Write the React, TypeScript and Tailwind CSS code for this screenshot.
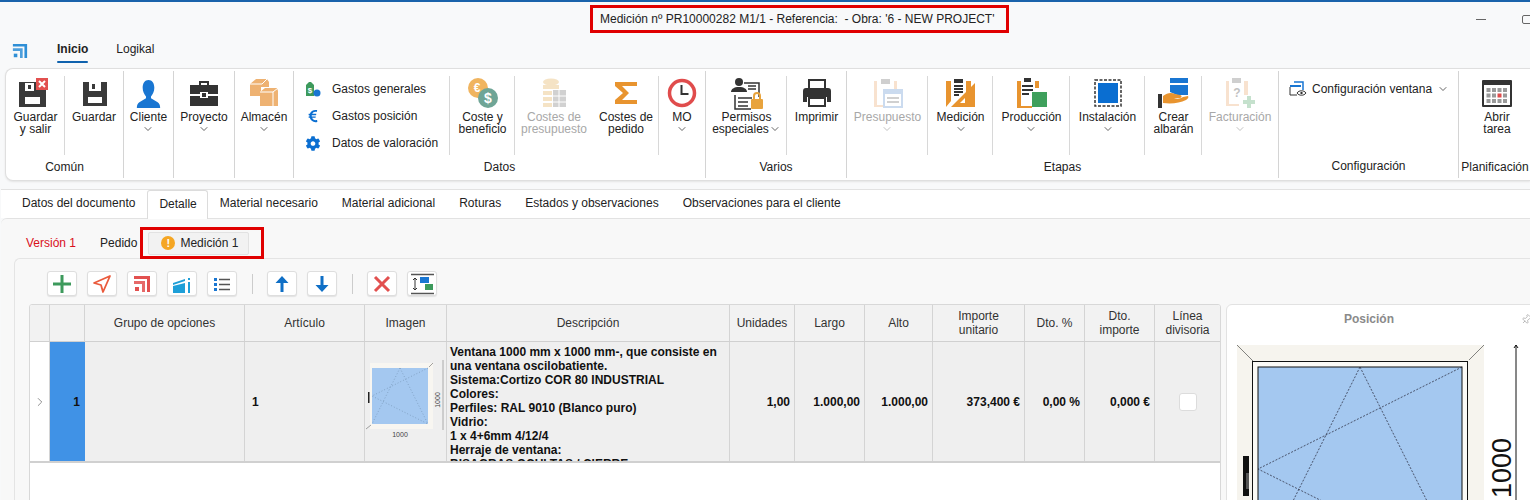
import { ReactNode } from 'react'
import { ChevronDown, ChevronRight, Pin } from 'lucide-react'
import { FaCog, FaEuroSign } from 'react-icons/fa'

const Logo = ({ c = '#2f8fd6', s = 18 }: { c?: string; s?: number }) => (
  <svg width={s} height={s} viewBox="0 0 18 18">
    <path d="M1 1h16v16h-3V4H1z" fill={c} />
    <path d="M1 6h11v11H9V9H1z" fill={c} opacity=".85" />
    <rect x="2" y="12" width="4" height="4" fill={c} />
  </svg>
)

const Floppy = ({ x = false }: { x?: boolean }) => (
  <svg width="32" height="30" viewBox="0 0 32 30" className={x ? '-ml-[3px]' : ''}>
    {x ? (
      <>
        <path d="M1 4h21v8h6v17H1z" fill="#3a3a3a" />
        <path d="M7 5h9v8H7zM7 19h15v7H7z" fill="#fff" />
        <rect x="10" y="7" width="3" height="4" fill="#3a3a3a" />
        <rect x="18" y="0" width="12" height="12" fill="#e2504f" />
        <path d="M21 3l6 6M27 3l-6 6" stroke="#fff" strokeWidth="2" />
      </>
    ) : (
      <>
        <path d="M5 4h24v24H5z" fill="#3a3a3a" />
        <path d="M11 4h12v9H11zM10 19h14v6H10z" fill="#fff" />
        <rect x="14" y="6" width="3" height="5" fill="#3a3a3a" />
      </>
    )}
  </svg>
)

const Person = () => (
  <svg width="25" height="29" viewBox="0 0 30 30" preserveAspectRatio="none">
    <path d="M15 1c4.500 0 7 3.500 7 8 0 4-2 7-4 9v2l8 4c2 1 3 3 3 6H1c0-3 1-5 3-6l8-4v-2c-2-2-4-5-4-9 0-4.500 2.500-8 7-8z" fill="#1976d2" />
  </svg>
)

const Briefcase = () => (
  <svg width="30" height="30" viewBox="0 0 30 30">
    <path d="M10 7V3h10v4h-2V5h-6v2z" fill="#333" />
    <path d="M1 7h28v9H19v-2h-8v2H1zM1 18h10v2h8v-2h10v10H1z" fill="#333" />
    <rect x="13" y="15" width="4" height="4" fill="#333" />
  </svg>
)

const Boxes = () => (
  <svg width="30" height="30" viewBox="0 0 30 30">
    <path d="M1 6l6-5h11l2 3v5H12v9H1z" fill="#eeb272" />
    <path d="M1 6h12l5-5" fill="none" stroke="#fff" />
    <path d="M11 14l5-4h12l1 3v15H11z" fill="#eeb272" />
    <path d="M11 14h13l5-4M24 14v14" fill="none" stroke="#fff" />
  </svg>
)

const Tag = () => (
  <svg width="16" height="16" viewBox="0 0 16 16">
    <path d="M1 4l3-3h2l3 3v11H1z" fill="#3d9a5c" />
    <text x="5" y="12" fontSize="8" fontFamily="Liberation Sans, sans-serif" fontWeight="700" fill="#fff" textAnchor="middle">$</text>
    <circle cx="12" cy="12" r="3.500" fill="#1976d2" />
  </svg>
)

const Coins = () => (
  <svg width="32" height="32" viewBox="0 0 32 32">
    <circle cx="11" cy="11" r="10" fill="#f0b45f" />
    <text x="10" y="15" fontSize="12" fontFamily="Liberation Sans, sans-serif" fontWeight="700" fill="#fff" textAnchor="middle">€</text>
    <circle cx="21" cy="21" r="10" fill="#6fa596" />
    <text x="21" y="26" fontSize="14" fontFamily="Liberation Sans, sans-serif" fontWeight="700" fill="#fff" textAnchor="middle">$</text>
  </svg>
)

const Database = () => (
  <svg width="26" height="30" viewBox="0 0 26 30" opacity=".45">
    <ellipse cx="10" cy="4" rx="8" ry="3.500" fill="#e9c27f" />
    <path d="M2 7h16v4H2zM2 13h9v4H2zM2 19h9v4H2zM2 25h9v4H2z" fill="#e9c27f" />
    <path d="M12 12h13v17H12z" fill="#9a9a9a" />
    <path d="M18 12v17M12 18h13M12 24h13" stroke="#fff" />
  </svg>
)

const Sigma = () => (
  <svg width="24" height="24" viewBox="0 0 24 24">
    <path d="M1 1h22v4H8l7 7-7 7h15v4H1v-4l8-7-8-7z" fill="#e8942f" />
  </svg>
)

const Clock = () => (
  <svg width="30" height="30" viewBox="0 0 30 30">
    <circle cx="15" cy="15" r="12.500" fill="none" stroke="#e04c4c" strokeWidth="3.500" />
    <path d="M14.500 7v9h7" fill="none" stroke="#333" strokeWidth="2" />
  </svg>
)

const Permisos = () => (
  <svg width="34" height="33" viewBox="0 0 34 33">
    <circle cx="9" cy="5" r="4" fill="#333" />
    <path d="M1 15c0-3 3-5 8-5s8 2 8 5z" fill="#333" />
    <path d="M14 6h15v14M5 18v14h16M18 9h8M18 12h8M8 21h14M8 25h10M8 29h10" fill="none" stroke="#333" strokeWidth="1.500" />
    <rect x="21" y="22" width="12" height="10" rx="1" fill="#e8a33d" />
    <path d="M24 22v-3a3 3 0 016 0v3" fill="none" stroke="#e8a33d" strokeWidth="2" />
  </svg>
)

const Printer = () => (
  <svg width="30" height="30" viewBox="0 0 30 30">
    <path d="M7 11V2h16v9" fill="none" stroke="#333" strokeWidth="2" />
    <path d="M4 10h22a3 3 0 013 3v11h-4v-5H5v5H1V13a3 3 0 013-3z" fill="#333" />
    <rect x="7" y="20" width="16" height="8" fill="#fff" stroke="#333" strokeWidth="2" />
  </svg>
)

const Clipboard = ({ children, faded }: { children?: ReactNode; faded?: boolean }) => (
  <svg width="32" height="32" viewBox="0 0 32 32" opacity={faded ? 0.4 : 1}>
    {children}
  </svg>
)

const Presupuesto = () => (
  <Clipboard faded>
    <path d="M2 4h3v24h8v2H2zM22 4h3v8h-3z" fill="#eeb98a" />
    <path d="M9 2h9v5H9z" fill="#888" />
    <rect x="12" y="13" width="18" height="17" fill="#fff" stroke="#7ea8d8" strokeWidth="2" />
    <path d="M12 14h18v3H12z" fill="#7ea8d8" />
    <path d="M15 21h12M15 25h12" stroke="#666" strokeWidth="1.500" />
  </Clipboard>
)

const Medicion = () => (
  <Clipboard>
    <path d="M1 4h5v20l-5 6zM21 4h5v9l-5 5zM6 30l24-24v24z" fill="#e8942f" />
    <path d="M20 21v5h-5z" fill="#fff" />
    <path d="M9 2h9v4H9z" fill="#333" />
    <path d="M9 9h9M9 12h9M9 15h9M9 18h5" stroke="#333" strokeWidth="1.800" />
  </Clipboard>
)

const Produccion = () => (
  <Clipboard>
    <path d="M1 4h4v25h11v2H1zM19 4h4v7h-4z" fill="#e8942f" />
    <path d="M8 1h7v4H8z" fill="#333" />
    <path d="M6 9h11M6 13h11M6 17h7" stroke="#333" strokeWidth="2" />
    <rect x="16" y="15" width="15" height="15" fill="#3fa05c" />
  </Clipboard>
)

const Instalacion = () => (
  <svg width="28" height="28" viewBox="0 0 28 28">
    <rect x="1" y="1" width="26" height="26" fill="none" stroke="#333" strokeWidth="1.500" strokeDasharray="3 1.500" />
    <rect x="4" y="4" width="20" height="20" fill="#0a6ed1" />
  </svg>
)

const Albaran = () => (
  <svg width="34" height="32" viewBox="0 0 34 32">
    <path d="M13 1h18v5H13zM13 8h18v10H20l-7-3z" fill="#1976d2" />
    <rect x="1" y="17" width="4" height="14" fill="#333" />
    <path d="M6 19c4-3 8-4 12-2l5 1c2 0 2 3 0 3h-6c3 1 6 1 9-1l5-1c1 1 0 3-2 4-6 3-14 4-23 3z" fill="#e8942f" />
  </svg>
)

const Facturacion = () => (
  <Clipboard faded>
    <path d="M2 4h3v23h10v2H2zM20 4h4v14h-4z" fill="#eeb98a" />
    <path d="M8 1h9v5H8z" fill="#888" />
    <text x="13" y="20" fontSize="12" fontWeight="700" fontFamily="Liberation Sans, sans-serif" fill="#666" textAnchor="middle">?</text>
    <path d="M23 19h4v4h4v4h-4v4h-4v-4h-4v-4h4z" fill="#6fb585" />
  </Clipboard>
)

const ConfigWin = () => (
  <svg width="18" height="16" viewBox="0 0 18 16">
    <path d="M5 1h9v8" fill="none" stroke="#1976d2" strokeWidth="1.500" />
    <path d="M1 4h11v2H1z" fill="#1976d2" />
    <path d="M1 6v8h7" fill="none" stroke="#333" />
    <path d="M8 12c2-3 7-3 9 0-2 3-7 3-9 0z" fill="#fff" stroke="#333" />
    <circle cx="12.500" cy="12" r="1.200" fill="#333" />
  </svg>
)

const Calendar = () => (
  <svg width="30" height="27" viewBox="0 0 30 27">
    <rect x="0" y="0" width="30" height="27" rx="1" fill="#333" />
    <rect x="2" y="5" width="26" height="20" fill="#fff" />
    {[0, 1, 2, 3].map((i) =>
      [0, 1, 2].map((j) => (
        <rect key={`${i}${j}`} x={4.500 + i * 5.500} y={8 + j * 5.500} width="4" height="4" fill={i === 2 && j === 1 ? '#e04c4c' : '#9a9a9a'} />
      ))
    )}
  </svg>
)

const Tool = ({ w, icon, lines, chevron, faded, sep, inlineChevron }: { w: string; icon: ReactNode; lines: string[]; chevron?: boolean; faded?: boolean; sep?: boolean; inlineChevron?: boolean }) => (
  <div className={`${w} relative flex flex-col items-center pt-[6px] h-[87px] shrink-0 ${faded ? 'text-[#a8a8a8]' : 'text-[#222]'}`}>
    <div className="h-[32px] flex items-center justify-center">{icon}</div>
    <div className="mt-[2px] text-center text-[12px] leading-[12px]">
      {lines.map((l, i) => (
        <div key={l} className="whitespace-nowrap flex items-center justify-center">
          {l}
          {inlineChevron && i === lines.length - 1 && <ChevronDown size={12} strokeWidth={1.400} />}
        </div>
      ))}
      {chevron && <ChevronDown size={12} strokeWidth={1.400} className="mx-auto" />}
    </div>
    {sep && <div className="absolute right-0 top-[5px] h-[79px] w-px bg-[#d8d8d8]" />}
  </div>
)

const Group = ({ w, label, children, last }: { w: string; label?: string; children: ReactNode; last?: boolean }) => (
  <div className={`${w} h-[107px] shrink-0 flex flex-col ${last ? '' : 'border-r border-[#d4d4d4]'}`}>
    <div className="flex h-[87px]">{children}</div>
    <div className="flex-1 flex items-center justify-center text-[12px] text-[#222] whitespace-nowrap pb-[3px]">{label}</div>
  </div>
)

const ToolBtn = ({ children }: { children: ReactNode }) => (
  <div className="w-[30px] h-[25px] bg-white border border-[#dedede] rounded-[3px] shadow-[0_1px_1px_#e2e2e2] flex items-center justify-center">{children}</div>
)

const DocTab = ({ children, active }: { children: ReactNode; active?: boolean }) => (
  <div className={`flex items-center whitespace-nowrap ${active ? 'h-[29px] pl-[11px] pr-[10px] pb-[3px] bg-white border-x border-t border-[#dcdcdc] rounded-t-[3px] relative z-10' : 'h-[25px] px-[12px]'}`}>{children}</div>
)

const cols = 'grid grid-cols-[20px_35px_160px_120px_82px_283px_65px_70px_68px_92px_60px_70px_66px]'

const Head = ({ children }: { children?: ReactNode }) => (
  <div className="h-[36px] bg-[#f2f2f2] border-r border-[#d4d4d4] flex items-center justify-center text-center text-[12px] leading-[14px] text-[#333]">{children}</div>
)

const Num = ({ children }: { children: ReactNode }) => (
  <div className="bg-[#efefef] border-r border-[#d4d4d4] flex items-center justify-end pr-[4px] pt-[1px] font-bold text-[12px] text-[#111]">{children}</div>
)

const Thumb = () => (
  <svg width="82" height="90" viewBox="0 0 82 90">
    <rect x="6" y="13" width="63" height="66" fill="#f8f6f1" />
    <rect x="8" y="18" width="56" height="56" fill="#a4c8f0" />
    <path d="M36 18L8 74M36 18l28 56M64 18L8 46l56 28" stroke="#6b8aa8" strokeWidth=".6" strokeDasharray="1 2" fill="none" />
    <path d="M69 13l-4 4M2 79l5-4" stroke="#666" strokeWidth=".6" />
    <rect x="4" y="42" width="1.500" height="11" fill="#222" />
    <path d="M79 10v70" stroke="#aaa" />
    <text x="36" y="87" fontSize="7" fontFamily="Liberation Sans, sans-serif" fill="#444" textAnchor="middle">1000</text>
    <text x="0" y="0" fontSize="7" fontFamily="Liberation Sans, sans-serif" fill="#444" textAnchor="middle" transform="translate(76 50) rotate(-90)">1000</text>
  </svg>
)

const BigWindow = () => (
  <svg width="300" height="160" viewBox="0 0 300 160" className="block">
    <rect x="2" y="2" width="247" height="158" fill="#f6f4ee" />
    <path d="M2 2l16 16M249 2l-15 15" stroke="#333" strokeWidth=".6" />
    <rect x="17.500" y="18.500" width="215" height="150" fill="#fbfaf6" stroke="#111" />
    <rect x="23" y="24" width="204" height="140" fill="#a4c8f0" stroke="#111" />
    <path d="M125 24L23 228M125 24l102 204M227 24L23 126l204 102" stroke="#223" strokeWidth=".7" strokeDasharray="2 1.500" fill="none" />
    <rect x="8" y="113" width="6" height="40" fill="#111" />
    <rect x="11" y="130" width="3" height="16" fill="#555" />
    <path d="M281 2v158M279 5l2-3 2 3" stroke="#111" fill="none" />
    <text x="0" y="0" fontSize="27" fontFamily="Liberation Sans, sans-serif" fill="#111" transform="translate(276 155) rotate(-90)">1000</text>
  </svg>
)

export default function App() {
  return (
    <div className="w-[1530px] h-[500px] overflow-hidden bg-[#f8f9fa] border-t-2 border-[#1a63ab] font-['Liberation_Sans',sans-serif] text-[12px] text-[#222]">
      <div className="h-[31px] flex items-start pt-[3px] relative">
        <div className="ml-[590px] w-[419px] h-[28px] border-[3px] border-[#e00000] flex items-center pl-[7px] pb-[1px] text-[12px] text-[#222] whitespace-pre">Medición nº PR10000282 M1/1 - Referencia:  - Obra: '6 - NEW PROJECT'</div>
        <div className="ml-auto flex items-center gap-[36px] pt-[10px]">
          <div className="w-[10px] h-px bg-[#666]" />
          <div className="w-[10px] h-[9px] border border-[#666] rounded-[2px] -mr-[2px]" />
        </div>
      </div>
      <div className="h-[35px] flex items-center pl-[12px] text-[12px]">
        <Logo s={16} />
        <div className="ml-[29px] relative font-bold text-[#222] pb-[4px]">
          Inicio
          <div className="absolute left-0 right-0 -bottom-[1px] h-[2px] rounded bg-[#0f62ae]" />
        </div>
        <div className="ml-[28px] pb-[4px]">Logikal</div>
      </div>
      <div className="ml-[5px] h-[113px] bg-white border border-[#dfdfdf] border-r-0 rounded-l-[8px] flex pt-[2px] shadow-[0_1px_2px_#e4e4e4]">
        <Group w="w-[118px]" label="Común">
          <Tool w="w-[59px]" icon={<Floppy x />} lines={['Guardar', 'y salir']} sep />
          <Tool w="w-[58px]" icon={<Floppy />} lines={['Guardar']} />
        </Group>
        <Group w="w-[50px]"><Tool w="w-[49px]" icon={<Person />} lines={['Cliente']} chevron /></Group>
        <Group w="w-[61px]"><Tool w="w-[60px]" icon={<Briefcase />} lines={['Proyecto']} chevron /></Group>
        <Group w="w-[59px]"><Tool w="w-[58px]" icon={<Boxes />} lines={['Almacén']} chevron /></Group>
        <Group w="w-[412px]" label="Datos">
          <div className="w-[156px] h-[87px] relative shrink-0 pt-[4px] pl-[11px] flex flex-col">
            <div className="h-[27px] flex items-center gap-[15px]"><Tag /><span className="-ml-[4px]">Gastos generales</span></div>
            <div className="h-[27px] flex items-center gap-[11px]"><FaEuroSign size={14} className="text-[#0a6ed1] w-[16px]" /><span>Gastos posición</span></div>
            <div className="h-[28px] flex items-center gap-[11px]"><FaCog size={15} className="text-[#0a6ed1] w-[16px]" /><span>Datos de valoración</span></div>
            <div className="absolute right-0 top-[5px] h-[79px] w-px bg-[#d8d8d8]" />
          </div>
          <Tool w="w-[65px]" icon={<Coins />} lines={['Coste y', 'beneficio']} sep />
          <Tool w="w-[78px]" icon={<Database />} lines={['Costes de', 'presupuesto']} faded />
          <Tool w="w-[66px]" icon={<Sigma />} lines={['Costes de', 'pedido']} sep />
          <Tool w="w-[46px]" icon={<Clock />} lines={['MO']} chevron />
        </Group>
        <Group w="w-[141px]" label="Varios">
          <Tool w="w-[81px]" icon={<Permisos />} lines={['Permisos', 'especiales']} inlineChevron sep />
          <Tool w="w-[59px]" icon={<Printer />} lines={['Imprimir']} />
        </Group>
        <Group w="w-[432px]" label="Etapas">
          <Tool w="w-[81px]" icon={<Presupuesto />} lines={['Presupuesto']} chevron faded sep />
          <Tool w="w-[65px]" icon={<Medicion />} lines={['Medición']} chevron sep />
          <Tool w="w-[77px]" icon={<Produccion />} lines={['Producción']} chevron sep />
          <Tool w="w-[75px]" icon={<Instalacion />} lines={['Instalación']} chevron sep />
          <Tool w="w-[57px]" icon={<Albaran />} lines={['Crear', 'albarán']} sep />
          <Tool w="w-[76px]" icon={<Facturacion />} lines={['Facturación']} chevron faded />
        </Group>
        <Group w="w-[180px]" label="Configuración">
          <div className="pl-[10px] pt-[4px] flex items-start">
            <div className="h-[27px] flex items-center gap-[5px] whitespace-nowrap">
              <ConfigWin />
              <span>Configuración ventana</span>
              <ChevronDown size={12} strokeWidth={1.400} />
            </div>
          </div>
        </Group>
        <Group w="w-[72px]" label="Planificación" last>
          <Tool w="w-[76px]" icon={<Calendar />} lines={['Abrir', 'tarea']} />
        </Group>
      </div>
      <div className="mt-[8px] ml-px bg-white border-t border-[#e2e2e2] h-[29px] flex pl-[9px] text-[12px] text-[#222] relative">
        <DocTab>Datos del documento</DocTab>
        <DocTab active>Detalle</DocTab>
        <DocTab>Material necesario</DocTab>
        <DocTab>Material adicional</DocTab>
        <DocTab>Roturas</DocTab>
        <DocTab>Estados y observaciones</DocTab>
        <DocTab>Observaciones para el cliente</DocTab>
      </div>
      <div className="ml-px bg-[#f8f8f8] border-t border-[#e2e2e2] rounded-tl-[6px] h-[283px]">
        <div className="h-[39px] pt-[8px] flex items-center pl-[25px] text-[12px]">
          <span className="text-[#d8101c]">Versión 1</span>
          <span className="ml-[24px]">Pedido</span>
          <div className="ml-[3px] w-[124px] h-[32px] border-[3px] border-[#e00000] flex items-center pl-[5px] pt-[1px]">
            <div className="w-[101px] h-[23px] bg-[#f2f2f2] border border-[#e2e2e2] rounded-[2px] flex items-center pl-[12px] gap-[5px]">
              <span className="w-[14px] h-[14px] rounded-full bg-[#f5a623] text-white font-bold text-[11px] flex items-center justify-center">!</span>
              Medición 1
            </div>
          </div>
        </div>
        <div className="ml-[13px] h-[243px] bg-[#f8f8f8] border-l border-t border-[#e4e4e4] rounded-tl-[6px] flex flex-col">
          <div className="h-[45px] shrink-0 flex items-center pl-[32px] pt-[4px]">
            <div className="flex gap-[10px]">
              <ToolBtn><svg width="20" height="20" viewBox="0 0 20 20"><path d="M8.500 1h3v7.500H19v3h-7.500V19h-3v-7.500H1v-3h7.500z" fill="#3d9a5c" /></svg></ToolBtn>
              <ToolBtn><svg width="20" height="20" viewBox="0 0 20 20"><path d="M18 2L2 9l7 2 2 7z" fill="none" stroke="#ea5a3c" strokeWidth="1.800" strokeLinejoin="round" /></svg></ToolBtn>
              <ToolBtn><Logo c="#e2504f" /></ToolBtn>
              <ToolBtn><svg width="20" height="18" viewBox="0 0 20 18"><path d="M1 8l12-4v2L1 10zM1 11l12-3v10H1zM16 3h2v2h-2zM16 7h2v11h-2z" fill="#1e9fd8" /></svg></ToolBtn>
              <ToolBtn><svg width="20" height="16" viewBox="0 0 20 16"><path d="M2 2h3v3H2zM2 7h3v3H2zM2 12h3v3H2z" fill="#1976d2" /><path d="M7 3.500h11M7 8.500h11M7 13.500h11" stroke="#555" strokeWidth="1.500" /></svg></ToolBtn>
            </div>
            <div className="w-px h-[20px] bg-[#ccc] ml-[15px] mr-[14px]" />
            <div className="flex gap-[10px]">
              <ToolBtn><svg width="18" height="20" viewBox="0 0 18 20"><path d="M9 2l6.500 7h-5v9h-3V9h-5z" fill="#0f6fc6" /></svg></ToolBtn>
              <ToolBtn><svg width="18" height="20" viewBox="0 0 18 20"><path d="M9 18l6.500-7h-5V2h-3v9h-5z" fill="#0f6fc6" /></svg></ToolBtn>
            </div>
            <div className="w-px h-[20px] bg-[#ccc] ml-[15px] mr-[14px]" />
            <div className="flex gap-[10px]">
              <ToolBtn><svg width="20" height="20" viewBox="0 0 20 20"><path d="M3 3l14 14M17 3L3 17" stroke="#e2504f" strokeWidth="3" /></svg></ToolBtn>
              <ToolBtn>
                <svg width="26" height="22" viewBox="0 0 26 22"><path d="M2 1.500h23M2 20.500h23" stroke="#555" strokeWidth="1.500" /><path d="M6 5v12M4 7l2-2 2 2M4 15l2 2 2-2" fill="none" stroke="#333" /><rect x="11" y="4" width="9" height="6" fill="#1976d2" /><rect x="16" y="11" width="8" height="6" fill="#3d9a5c" /></svg>
              </ToolBtn>
            </div>
          </div>
          <div className="flex gap-[5px] pl-[14px]">
            <div className="w-[1192px] shrink-0 h-[198px] bg-white border border-[#d8d8d8] rounded-t-[3px] overflow-hidden">
              <div className={cols}>
                <Head />
                <Head />
                <Head>Grupo de opciones</Head>
                <Head>Artículo</Head>
                <Head>Imagen</Head>
                <Head>Descripción</Head>
                <Head>Unidades</Head>
                <Head>Largo</Head>
                <Head>Alto</Head>
                <Head>Importe<br />unitario</Head>
                <Head>Dto. %</Head>
                <Head>Dto.<br />importe</Head>
                <Head>Línea<br />divisoria</Head>
              </div>
              <div className={`${cols} h-[122px] border-t border-b-2 border-[#d0d0d0]`}>
                <div className="bg-white border-r border-[#d4d4d4] flex items-center justify-center"><ChevronRight size={14} strokeWidth={1} className="text-[#444]" /></div>
                <div className="bg-[#4092e6] flex items-center justify-end pr-[5px] pt-[1px] font-bold text-[#111]">1</div>
                <div className="bg-[#efefef] border-r border-[#d4d4d4]" />
                <div className="bg-[#efefef] border-r border-[#d4d4d4] flex items-center pl-[7px] pt-[1px] font-bold text-[#111]">1</div>
                <div className="bg-[#efefef] border-r border-[#d4d4d4] pt-[8px] overflow-hidden"><div className="-ml-[1px]"><Thumb /></div></div>
                <div className="bg-[#efefef] border-r border-[#d4d4d4] overflow-hidden pl-[3px] pt-[3px] font-bold text-[12px] leading-[14px] text-[#111]">
                  Ventana 1000 mm x 1000 mm-, que consiste en una ventana oscilobatiente.<br />
                  Sistema:Cortizo COR 80 INDUSTRIAL<br />
                  Colores:<br />
                  Perfiles: RAL 9010 (Blanco puro)<br />
                  Vidrio:<br />
                  1 x 4+6mm 4/12/4<br />
                  Herraje de ventana:<br />
                  BISAGRAS OCULTAS / CIERRE
                </div>
                <Num>1,00</Num>
                <Num>1.000,00</Num>
                <Num>1.000,00</Num>
                <Num>373,400 €</Num>
                <Num>0,00 %</Num>
                <Num>0,000 €</Num>
                <div className="bg-[#efefef] flex items-center justify-center">
                  <div className="w-[18px] h-[18px] bg-white border border-[#dcdcdc] rounded-[3px]" />
                </div>
              </div>
            </div>
            <div className="w-[320px] shrink-0 h-[198px] bg-white border border-[#e2e2e2] rounded-tl-[6px] overflow-hidden">
              <div className="h-[28px] relative flex items-center pl-[117px] font-bold text-[12px] text-[#8a8a8a]">
                Posición
                <Pin size={11} strokeWidth={1} className="absolute left-[294px] top-[9px] rotate-45 text-[#777]" />
              </div>
              <div className="pl-[8px] pt-[10px]"><BigWindow /></div>
            </div>
          </div>
        </div>
      </div>
    </div>
  )
}
